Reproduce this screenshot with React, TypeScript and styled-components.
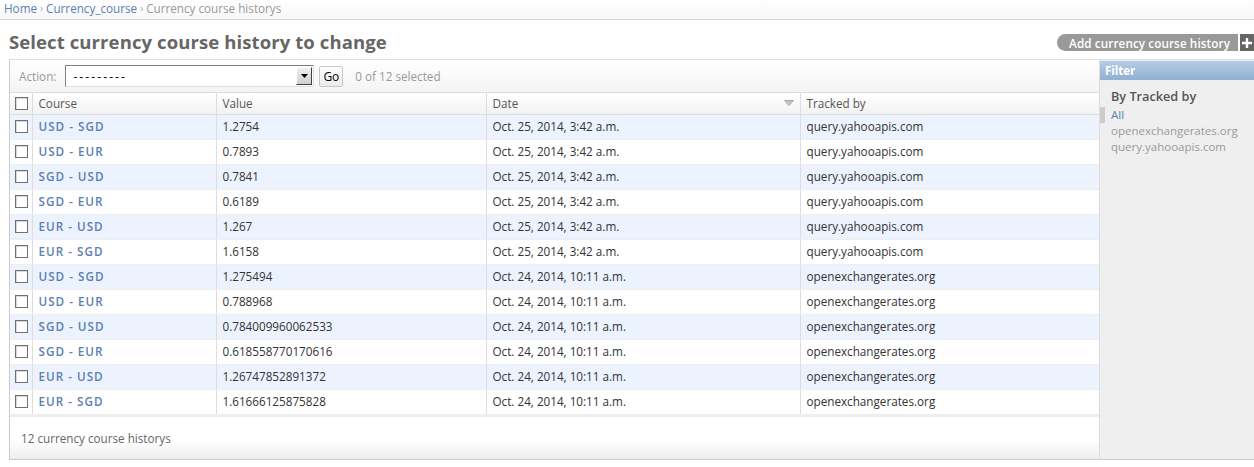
import React from "react";
import styled, { createGlobalStyle } from "styled-components";

const GlobalStyle = createGlobalStyle`
  html, body { margin: 0; padding: 0; background: #fff; }
  body {
    font-family: "Open Sans", "DejaVu Sans", sans-serif;
    font-size: 11.7px;
    color: #333;
  }
  * { box-sizing: border-box; }
`;

const LINK = "#5b80b2";

const Breadcrumbs = styled.div`
  height: 20px;
  padding: 0 4px 4px;
  display: flex;
  align-items: center;
  gap: 3px;
  font-size: 11.7px;
  color: #999;
  background: linear-gradient(to bottom, #fff, #f7f7f7);
  border-bottom: 1px solid #d6d6d6;
`;

const Crumb = styled.a`
  color: ${LINK};
  text-decoration: none;
`;

const Sep = styled.span`
  color: #aaa;
  font-size: 10px;
`;

const Content = styled.div`
  padding: 0 0 0 9px;
`;

const HeaderRow = styled.div`
  display: flex;
  align-items: flex-start;
  justify-content: space-between;
  padding-top: 10px;
  height: 39px;
`;

const Title = styled.h1`
  margin: 0;
  font-size: 18.5px;
  line-height: 24px;
  font-weight: 700;
  letter-spacing: 0.1px;
  color: #666;
`;

const AddLink = styled.a`
  display: flex;
  align-items: stretch;
  margin-top: 4px;
  height: 17px;
  text-decoration: none;
`;

const AddText = styled.span`
  display: flex;
  align-items: center;
  padding: 0 8px 0 12px;
  background: #999;
  color: #fff;
  font-weight: 600;
  font-size: 11.7px;
  letter-spacing: 0.1px;
  border-radius: 9px 0 0 9px;
`;

const AddPlus = styled.span`
  display: flex;
  align-items: center;
  justify-content: center;
  width: 14px;
  margin-left: 2px;
  background: #666;
`;

const Module = styled.div`
  display: flex;
  border-top: 1px solid #ddd;
  border-left: 1px solid #ccc;
  border-bottom: 1px solid #ccc;
`;

const Main = styled.div`
  flex: 1;
  min-width: 0;
  display: flex;
  flex-direction: column;
`;

const Actions = styled.div`
  height: 33px;
  display: flex;
  align-items: center;
  padding: 0 9px;
  gap: 5px;
  background: linear-gradient(to bottom, #fff 0%, #f4f4f4 100%);
  border-bottom: 1px solid #ddd;
  color: #999;
`;

const ActionLabel = styled.span`
  margin-right: 4px;
`;

const FakeSelect = styled.div`
  width: 249px;
  height: 22px;
  display: flex;
  align-items: stretch;
  border: 1px solid;
  border-color: #808080 #e0e0e0 #e0e0e0 #808080;
  background: #fff;
  color: #000;
  padding: 1px;
`;

const SelectText = styled.span`
  flex: 1;
  display: flex;
  align-items: center;
  padding-left: 6px;
  font-size: 12px;
  letter-spacing: 2.1px;
`;

const SelectArrow = styled.span`
  width: 16px;
  display: flex;
  align-items: center;
  justify-content: center;
  background: linear-gradient(to bottom, #f0f0f0, #d4d0c8);
  border: 1px solid;
  border-color: #fff #404040 #404040 #fff;
`;

const GoButton = styled.button`
  height: 21px;
  padding: 0 3px;
  font-family: inherit;
  font-size: 12px;
  color: #000;
  background: linear-gradient(to bottom, #fdfdfd, #ebebeb);
  border: 1px solid #c8c8c8;
  border-radius: 2px;
`;

const Counter = styled.span`
  margin-left: 7px;
  color: #999;
`;

const Table = styled.table`
  width: 100%;
  border-collapse: collapse;
  table-layout: fixed;
`;

const HeadCell = styled.th<{ $first?: boolean }>`
  height: 21px;
  padding: 0 6px;
  text-align: left;
  font-weight: 400;
  font-size: 11.7px;
  color: #555;
  background: linear-gradient(to bottom, #fff, #f2f2f2);
  border-bottom: 1px solid #ddd;
  border-left: ${(p) => (p.$first ? "none" : "1px solid #ddd")};
  white-space: nowrap;
`;

const HeadInner = styled.div`
  display: flex;
  align-items: center;
  justify-content: space-between;
`;

const Row = styled.tr<{ $alt: boolean }>`
  background: ${(p) => (p.$alt ? "#edf3fe" : "#fff")};
`;

const Cell = styled.td<{ $first?: boolean }>`
  height: 25px;
  padding: 0 6px 1px;
  border-bottom: 1px solid #eee;
  border-left: ${(p) => (p.$first ? "none" : "1px solid #ddd")};
  white-space: nowrap;
  vertical-align: middle;
`;

const CourseCell = styled.th`
  height: 25px;
  padding: 0 6px 1px;
  text-align: left;
  border-bottom: 1px solid #eee;
  border-left: 1px solid #ddd;
  font-weight: 600;
  white-space: nowrap;
`;

const CourseLink = styled.a`
  color: ${LINK};
  text-decoration: none;
  letter-spacing: 1px;
`;

const Check = styled.span`
  display: block;
  width: 13px;
  height: 13px;
  margin-left: -1px;
  border: 1px solid #707070;
  background: #fff;
  box-shadow: inset 1px 1px 0 #d8d8d8;
`;

const Paginator = styled.div`
  height: 44px;
  display: flex;
  align-items: center;
  padding-left: 11px;
  border-top: 2px solid #eee;
  color: #666;
  background: linear-gradient(to bottom, #fff 55%, #ededed 100%);
`;

const Filter = styled.div`
  width: 155px;
  flex: none;
  background: #efefef;
  border-left: 1px solid #ddd;
  padding-top: 1px;
`;

const FilterTitle = styled.h2`
  margin: 0;
  height: 19px;
  padding: 0 5px;
  display: flex;
  align-items: center;
  font-size: 11.5px;
  font-weight: 700;
  color: #fff;
  background: linear-gradient(to bottom, #b7cde6, #90afd3);
`;

const FilterHeading = styled.h3`
  margin: 0;
  padding: 7px 0 2px 11px;
  font-size: 12.7px;
  font-weight: 600;
  color: #555;
`;

const FilterList = styled.ul`
  list-style: none;
  margin: 0;
  padding: 0;
`;

const FilterItem = styled.li<{ $selected?: boolean }>`
  height: 16px;
  line-height: 16px;
  padding-left: ${(p) => (p.$selected ? "6px" : "11px")};
  border-left: ${(p) => (p.$selected ? "5px solid #ccc" : "none")};
  color: ${(p) => (p.$selected ? LINK : "#999")};
  font-size: 11.5px;
`;

type Rec = { course: string; value: string; date: string; by: string };

const rows: Rec[] = [
  { course: "USD - SGD", value: "1.2754", date: "Oct. 25, 2014, 3:42 a.m.", by: "query.yahooapis.com" },
  { course: "USD - EUR", value: "0.7893", date: "Oct. 25, 2014, 3:42 a.m.", by: "query.yahooapis.com" },
  { course: "SGD - USD", value: "0.7841", date: "Oct. 25, 2014, 3:42 a.m.", by: "query.yahooapis.com" },
  { course: "SGD - EUR", value: "0.6189", date: "Oct. 25, 2014, 3:42 a.m.", by: "query.yahooapis.com" },
  { course: "EUR - USD", value: "1.267", date: "Oct. 25, 2014, 3:42 a.m.", by: "query.yahooapis.com" },
  { course: "EUR - SGD", value: "1.6158", date: "Oct. 25, 2014, 3:42 a.m.", by: "query.yahooapis.com" },
  { course: "USD - SGD", value: "1.275494", date: "Oct. 24, 2014, 10:11 a.m.", by: "openexchangerates.org" },
  { course: "USD - EUR", value: "0.788968", date: "Oct. 24, 2014, 10:11 a.m.", by: "openexchangerates.org" },
  { course: "SGD - USD", value: "0.784009960062533", date: "Oct. 24, 2014, 10:11 a.m.", by: "openexchangerates.org" },
  { course: "SGD - EUR", value: "0.618558770170616", date: "Oct. 24, 2014, 10:11 a.m.", by: "openexchangerates.org" },
  { course: "EUR - USD", value: "1.26747852891372", date: "Oct. 24, 2014, 10:11 a.m.", by: "openexchangerates.org" },
  { course: "EUR - SGD", value: "1.61666125875828", date: "Oct. 24, 2014, 10:11 a.m.", by: "openexchangerates.org" },
];

const SortDown = () => (
  <svg width="10" height="6" viewBox="0 0 10 6">
    <path d="M0.5 0.5 H9.5 L5 5.5 Z" fill="#c4c4c4" stroke="#a8a8a8" strokeWidth="1" />
  </svg>
);

const ArrowDown = () => (
  <svg width="7" height="4" viewBox="0 0 7 4">
    <path d="M0 0 H7 L3.5 4 Z" fill="#000" />
  </svg>
);

const Plus = () => (
  <svg width="10" height="10" viewBox="0 0 10 10">
    <path d="M5 0 V10 M0 5 H10" stroke="#fff" strokeWidth="2.4" />
  </svg>
);

export default function App() {
  return (
    <>
      <GlobalStyle />
      <Breadcrumbs>
        <Crumb href="#">Home</Crumb>
        <Sep>›</Sep>
        <Crumb href="#">Currency_course</Crumb>
        <Sep>›</Sep>
        <span>Currency course historys</span>
      </Breadcrumbs>
      <Content>
        <HeaderRow>
          <Title>Select currency course history to change</Title>
          <AddLink href="#">
            <AddText>Add currency course history</AddText>
            <AddPlus>
              <Plus />
            </AddPlus>
          </AddLink>
        </HeaderRow>
        <Module>
          <Main>
            <Actions>
              <ActionLabel>Action:</ActionLabel>
              <FakeSelect>
                <SelectText>---------</SelectText>
                <SelectArrow>
                  <ArrowDown />
                </SelectArrow>
              </FakeSelect>
              <GoButton type="button">Go</GoButton>
              <Counter>0 of 12 selected</Counter>
            </Actions>
            <Table>
              <colgroup>
                <col style={{ width: 22 }} />
                <col style={{ width: 184 }} />
                <col style={{ width: 270 }} />
                <col style={{ width: 314 }} />
                <col />
              </colgroup>
              <thead>
                <tr>
                  <HeadCell $first>
                    <Check />
                  </HeadCell>
                  <HeadCell>Course</HeadCell>
                  <HeadCell>Value</HeadCell>
                  <HeadCell>
                    <HeadInner>
                      <span>Date</span>
                      <SortDown />
                    </HeadInner>
                  </HeadCell>
                  <HeadCell>Tracked by</HeadCell>
                </tr>
              </thead>
              <tbody>
                {rows.map((r, i) => (
                  <Row key={i} $alt={i % 2 === 0}>
                    <Cell $first>
                      <Check />
                    </Cell>
                    <CourseCell>
                      <CourseLink href="#">{r.course}</CourseLink>
                    </CourseCell>
                    <Cell>{r.value}</Cell>
                    <Cell>{r.date}</Cell>
                    <Cell>{r.by}</Cell>
                  </Row>
                ))}
              </tbody>
            </Table>
            <Paginator>12 currency course historys</Paginator>
          </Main>
          <Filter>
            <FilterTitle>Filter</FilterTitle>
            <FilterHeading>By Tracked by</FilterHeading>
            <FilterList>
              <FilterItem $selected>All</FilterItem>
              <FilterItem>openexchangerates.org</FilterItem>
              <FilterItem>query.yahooapis.com</FilterItem>
            </FilterList>
          </Filter>
        </Module>
      </Content>
    </>
  );
}
